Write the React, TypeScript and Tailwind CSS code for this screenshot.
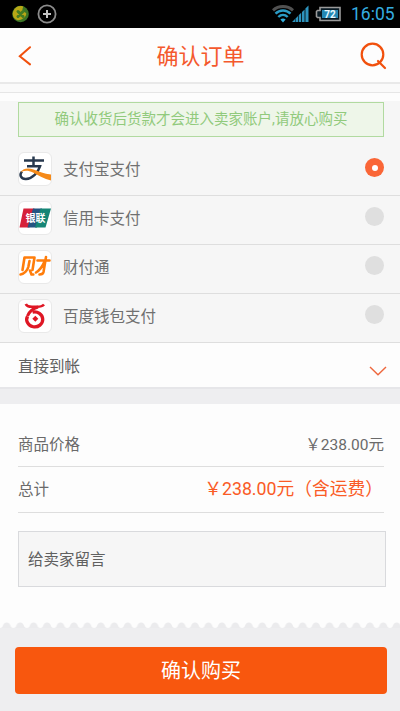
import clsx from "clsx";
import type { ReactNode } from "react";

function StatusBar() {
  return (
    <div className="flex h-7 shrink-0 items-center bg-black pl-3 pr-[3px]">
      <svg width="17" height="18" viewBox="0 0 17 18">
        <circle cx="8.5" cy="9" r="8.3" fill="#3c7426" />
        <path d="M1 7a8 8 0 0 1 9-6c3 1-1 3 1 5s4 1 3 4-6 6-9 5-5-4-4-8z" fill="#b8a716" />
        <path d="M6 6.500l5 5M11 6.500l-5 5" stroke="#467c22" strokeWidth="3" strokeLinecap="round" />
      </svg>
      <svg className="ml-2" width="20" height="20" viewBox="0 0 20 20" fill="none">
        <circle cx="10" cy="10" r="8.6" stroke="#8c8c8c" strokeWidth="1.8" />
        <path d="M10 6v8M6 10h8" stroke="#c4c4c4" strokeWidth="2" />
      </svg>
      <svg className="ml-auto" width="22" height="18" viewBox="0 0 22 18" fill="none" strokeWidth="2.4">
        <path d="M1 5.300c5.600-5 14.400-5 20 0" stroke="#515151" strokeWidth="3" />
        <path d="M3.500 8.600c4.200-4.200 10.800-4.200 15 0M6.300 12c2.800-2.800 6.600-2.800 9.400 0" stroke="#2b9bc5" />
        <path d="M8.400 14.500c1.500-1.200 3.700-1.200 5.200 0L11 17.500z" fill="#35b1df" />
      </svg>
      <svg className="-ml-[2px]" width="17" height="18" viewBox="0 0 17 18" fill="#2d93bd">
        <path d="M0 17l3-3v3zM3.500 13.500l2.500-2.500v6H3.500zM6.700 10.300L9.200 7.800V17H6.700zM10 7l2.600-2.600V17H10zM13.400 3.600L16.500.5V17h-3.100z" />
      </svg>
      <svg className="ml-[6px]" width="27" height="16" viewBox="0 0 27 16">
        <path d="M5 1.500h20v13H5v-3H2.500l-1-1V5.500l1-1H5z" fill="#071923" stroke="#9a9a9a" strokeWidth="1.600" />
        <path d="M7 4h16v8H7z" fill="#2488b4" />
        <text x="15" y="11.700" fill="#eafaff" textAnchor="middle" fontFamily="Roboto" fontWeight="700" fontSize="10">72</text>
      </svg>
      <span className="ml-[9px] w-[46px] whitespace-nowrap font-[Roboto,sans-serif] text-[17.500px] leading-7 text-[#35ade0]">16:05</span>
    </div>
  );
}

function Header() {
  return (
    <header className="flex h-14 shrink-0 items-center border-b-2 border-[#e9e9e9] bg-[#fdfdfd] pl-[18px] pr-[13px] text-[#f1500d]">
      <svg className="mt-px" width="14" height="20" viewBox="0 0 14 20" fill="none" stroke="currentColor" strokeWidth="2" strokeLinecap="round">
        <path d="M12 1.200L1.800 10.200l10.200 8.200" />
      </svg>
      <h1 className="flex-1 pl-[9px] pt-1 text-center text-[22px] font-normal leading-none text-[#f4592d]">确认订单</h1>
      <svg className="mt-px" width="27" height="28" viewBox="0 0 27 28" fill="none" stroke="currentColor" strokeWidth="2.200">
        <circle cx="12.500" cy="12.500" r="10.800" />
        <path d="M18 19l7 7" strokeLinecap="round" />
      </svg>
    </header>
  );
}

function AlipayLogo() {
  return (
    <svg width="32" height="32" viewBox="0 0 32 32" fill="none">
      <path d="M5 7.500h20M14.500 3.500v9.500M8 13.300h13C19 19.500 13.500 25.500 7 26c-5 .3-7-4-4-7.500" stroke="#27384e" strokeWidth="2.500" />
      <path d="M1.500 20C3 15.500 9 14.500 14.500 16.500 20 18.500 25 21 32 21.500V27.500C25 26 19.500 22.500 14 19.500 9 17 4 17 1.500 20z" fill="#f58a19" />
    </svg>
  );
}

function UnionPayLogo() {
  return (
    <svg width="32" height="32" viewBox="0 0 32 32">
      <path d="M4.500 6.500h11l-5 19H.5z" fill="#d6213a" />
      <path d="M14 6.500h9l-5 19H8.500z" fill="#245482" />
      <path d="M21.500 6.500H32l-5.500 19H16z" fill="#168676" />
      <text x="16.500" y="19.500" fill="#fff" textAnchor="middle" fontSize="10" fontWeight="700">银联</text>
    </svg>
  );
}

function TenpayLogo() {
  return (
    <svg width="32" height="32" viewBox="0 0 32 32" fill="none" stroke="#ff7d0b" strokeWidth="2.600" strokeLinecap="round" strokeLinejoin="round">
      <path d="M3.500 19L5.500 6.500h10L13.500 19M10.500 10L9.300 16C8.500 19.500 5 23 1.500 23.500M11 19.500l1.500 4h1.800" />
      <path d="M18.500 9.500h12M27 6L24.500 21c-.5 2.500-2 2.500-4 2.500M25.500 10.500c-2 5-4.500 8.500-8.500 11" />
    </svg>
  );
}

function BaiduLogo() {
  return (
    <svg width="32" height="32" viewBox="0 0 32 32" fill="none" stroke="#df1725">
      <path d="M6.800 4c1 2.700 3.500 2.800 6.200 2.800h5c3.500 0 5.500-.5 7-2.300" strokeWidth="2.600" />
      <path d="M19 7c-5 1.500-8.500 4-10.500 9" strokeWidth="3" />
      <path d="M13.500 12.200a8 7.500 0 1 1-5 4" strokeWidth="3.300" />
      <path d="M16.300 15.700l3 3-3 3-3-3z" fill="#df1725" stroke="none" />
    </svg>
  );
}

const methods: { name: string; logo: ReactNode; selected?: boolean }[] = [
  { name: "支付宝支付", logo: <AlipayLogo />, selected: true },
  { name: "信用卡支付", logo: <UnionPayLogo /> },
  { name: "财付通", logo: <TenpayLogo /> },
  { name: "百度钱包支付", logo: <BaiduLogo /> },
];

function PaymentMethods() {
  return (
    <div className="bg-[#f6f6f6]">
      {methods.map((method) => (
        <div
          key={method.name}
          className="flex h-[49px] items-center border-b border-[#dedede] pb-1 pl-[18px] pr-4 text-[15.500px] text-[#707070]"
        >
          <div className="size-[34px] shrink-0 overflow-hidden rounded-md border border-[#e9e9e9] bg-white">
            {method.logo}
          </div>
          <span className="ml-[11px] mt-1">{method.name}</span>
          <span
            className={clsx(
              "-mt-[3px] ml-auto flex size-[19px] items-center justify-center rounded-full",
              method.selected ? "bg-[#fa6637]" : "bg-[#dfdfdf]"
            )}
          >
            {method.selected && <span className="size-1.5 rounded-full bg-white" />}
          </span>
        </div>
      ))}
    </div>
  );
}

function OrderSummary() {
  return (
    <section className="h-[218px] shrink-0 bg-[#fdfdfd] pl-[18px] pr-[14px] pt-4">
      <div className="mr-[2px] flex h-[47px] items-center justify-between border-b border-[#dedede] pt-[5px] text-[15.500px] text-[#6a6a6a]">
        <span>商品价格</span>
        <span>￥238.00元</span>
      </div>
      <div className="mr-[2px] flex h-[46px] items-center justify-between border-b border-[#dedede] pt-[3px] text-[15.500px] text-[#6a6a6a]">
        <span>总计</span>
        <span className="-mt-1 mr-px text-[17.750px] text-[#fa5b26]">￥238.00元（含运费）</span>
      </div>
      <div className="mt-[18px] flex h-14 items-center border border-[#d9dadd] bg-[#f6f6f6] pl-[9px] pt-[3px] text-[15.500px] text-[#606060]">
        给卖家留言
      </div>
    </section>
  );
}

export default function App() {
  return (
    <main className="flex h-[711px] w-[400px] flex-col overflow-hidden bg-[#eeeef0] font-[Roboto,'Noto_Sans_CJK_SC',sans-serif]">
      <StatusBar />
      <Header />
      <div className="h-[9px] shrink-0 border-b border-[#e6e6e6] bg-[#fafafa]" />
      <div className="h-2 shrink-0 bg-[#fdfdfd]" />
      <div className="h-[46px] shrink-0 bg-[#f6f6f6] pl-[18px] pr-4 pt-px">
        <div className="flex h-[35px] items-center justify-center border border-[#b1daa0] bg-[#eef6e9] pt-px text-[14.500px] text-[#91ca7c]">
          确认收货后货款才会进入卖家账户,请放心购买
        </div>
      </div>
      <PaymentMethods />
      <div className="flex h-[46px] shrink-0 items-center justify-between border-b-2 border-[#e6e6e9] bg-[#fdfdfd] pl-[18px] pr-[13px] pt-1 text-[15.500px] text-[#606060]">
        <span className="mt-px">直接到帐</span>
        <svg className="mt-[7px]" width="18" height="10" viewBox="0 0 18 10" fill="none" stroke="#ee673d" strokeWidth="1.400">
          <path d="M1 1l8 7.800L17 1" />
        </svg>
      </div>
      <div className="h-[15px] shrink-0 bg-[#eeeef0]" />
      <OrderSummary />
      <svg className="shrink-0" width="400" height="6" viewBox="0 0 400 6">
        <defs>
          <pattern id="scallop" width="13.450" height="6" patternUnits="userSpaceOnUse">
            <rect width="13.450" height="6" fill="#fdfdfd" />
            <path d="M0 6c2 0 2.500-1.200 3-2.500C3.600 1.500 5 .5 6.700.5s3.100 1 3.700 3c.5 1.300 1 2.500 3.050 2.500z" fill="#ebebed" />
          </pattern>
        </defs>
        <rect width="400" height="6" fill="url(#scallop)" />
      </svg>
      <footer className="px-[15px] pr-[13px] pt-[19px]">
        <button className="flex h-[47px] w-full items-center justify-center rounded bg-[#f8570e] text-[20px] text-white">
          确认购买
        </button>
      </footer>
    </main>
  );
}
